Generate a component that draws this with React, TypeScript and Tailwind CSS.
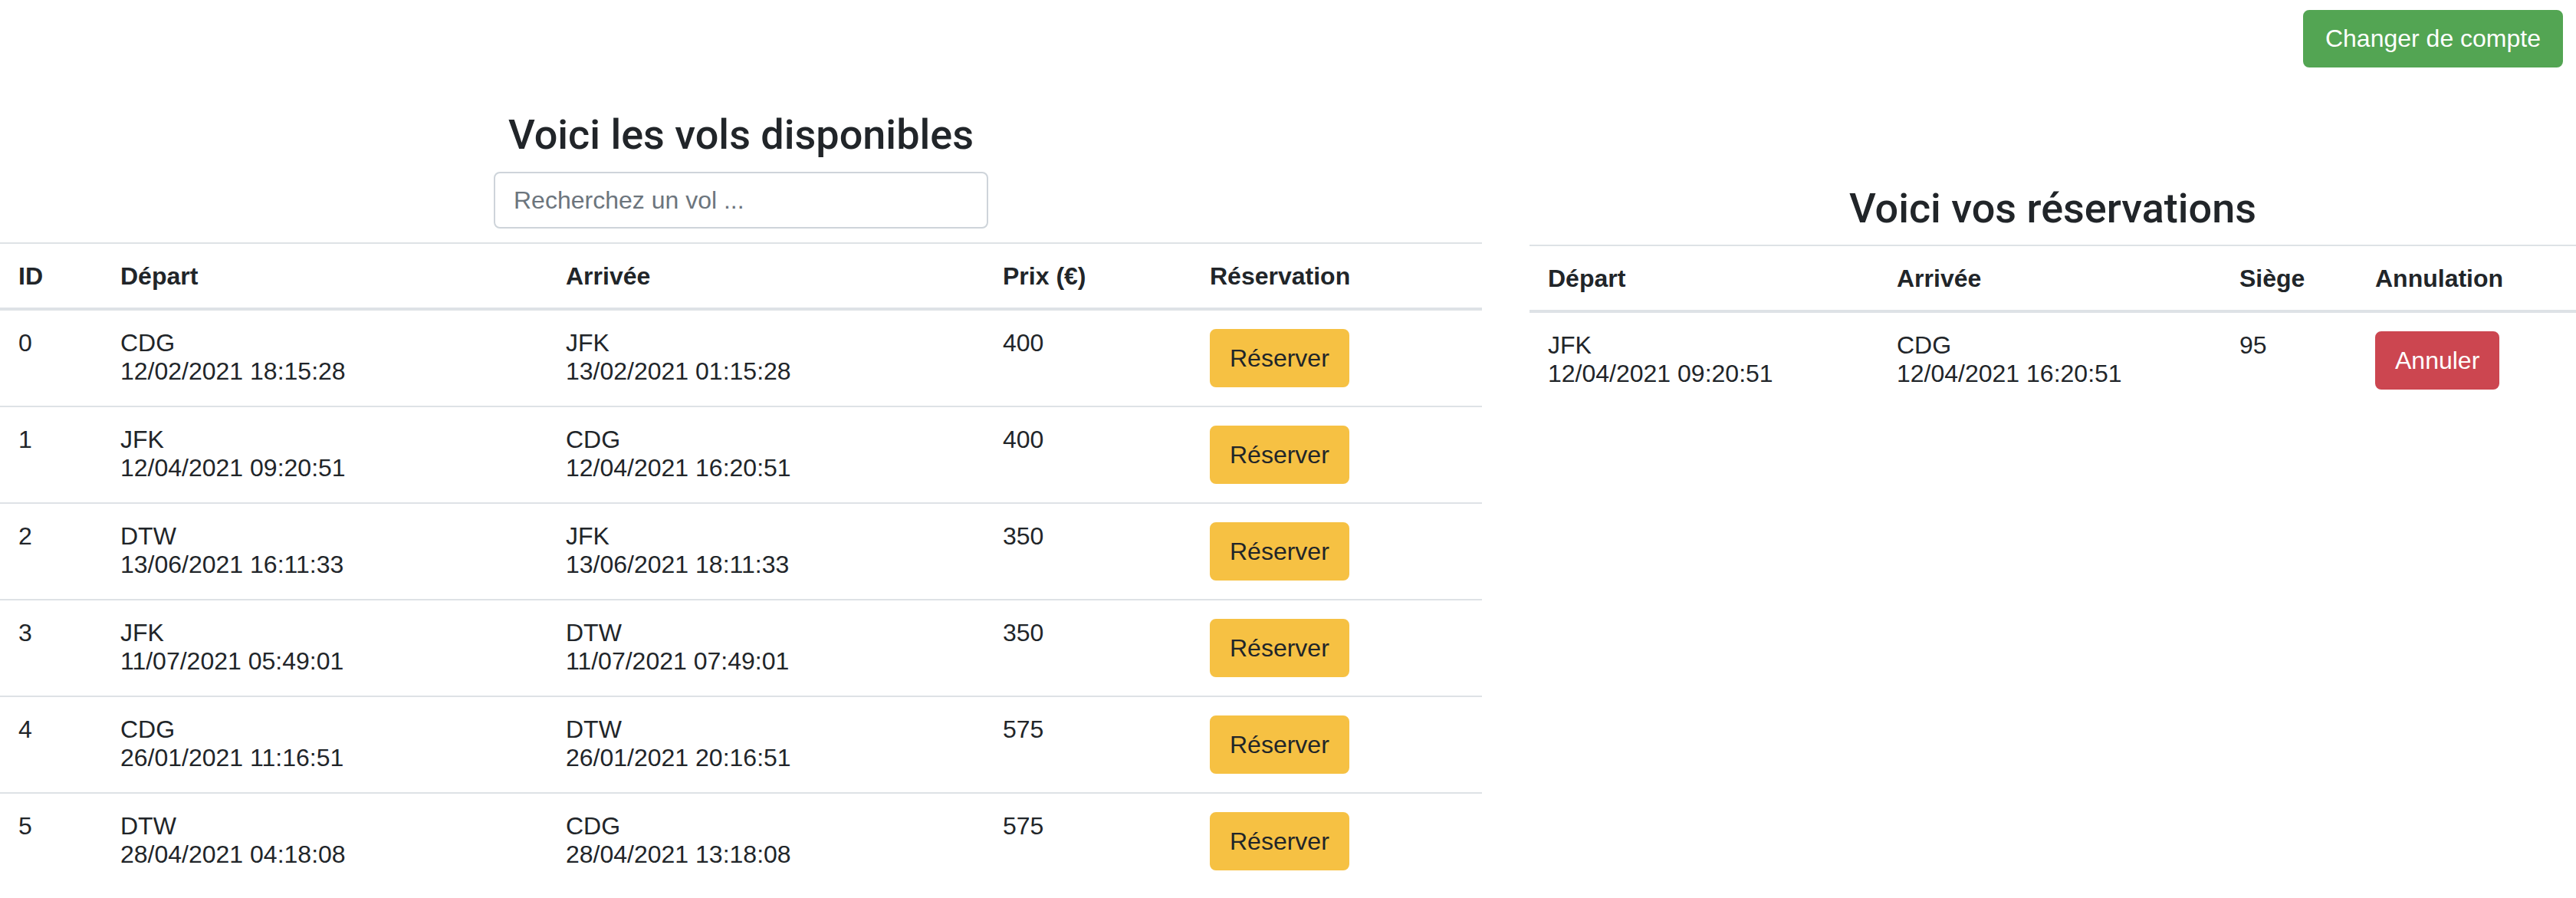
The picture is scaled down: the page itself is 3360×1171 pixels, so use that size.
import React from 'react';

type Flight = {
  id: number;
  from: string;
  fromDate: string;
  to: string;
  toDate: string;
  price: number;
};

const flights: Flight[] = [
  { id: 0, from: 'CDG', fromDate: '12/02/2021 18:15:28', to: 'JFK', toDate: '13/02/2021 01:15:28', price: 400 },
  { id: 1, from: 'JFK', fromDate: '12/04/2021 09:20:51', to: 'CDG', toDate: '12/04/2021 16:20:51', price: 400 },
  { id: 2, from: 'DTW', fromDate: '13/06/2021 16:11:33', to: 'JFK', toDate: '13/06/2021 18:11:33', price: 350 },
  { id: 3, from: 'JFK', fromDate: '11/07/2021 05:49:01', to: 'DTW', toDate: '11/07/2021 07:49:01', price: 350 },
  { id: 4, from: 'CDG', fromDate: '26/01/2021 11:16:51', to: 'DTW', toDate: '26/01/2021 20:16:51', price: 575 },
  { id: 5, from: 'DTW', fromDate: '28/04/2021 04:18:08', to: 'CDG', toDate: '28/04/2021 13:18:08', price: 575 },
];

const bookings = [
  { from: 'JFK', fromDate: '12/04/2021 09:20:51', to: 'CDG', toDate: '12/04/2021 16:20:51', seat: 95 },
];

const thClass =
  'text-left align-bottom font-bold pl-[24px] pr-[24px] pt-[24px] pb-[22px] border-t-2 border-b-4 border-[#dee2e6]';

const tdClass = (first: boolean) =>
  first ? 'align-top p-[24px]' : 'align-top p-[24px] border-t-2 border-[#dee2e6]';

export default function App() {
  return (
    <div className="min-h-screen bg-white text-[#212529] font-['Liberation_Sans',Arial,sans-serif] text-[32px] leading-[37px]">
      {/* top bar */}
      <div className="flex justify-end pt-[13px] pr-[17px]">
        <button className="h-[75px] px-[27px] flex items-center rounded-[8px] bg-[#53a553] border-2 border-[#53a553] text-white text-[32px]">
          Changer de compte
        </button>
      </div>

      <div className="flex items-start">
        {/* available flights */}
        <div className="w-[1933px] shrink-0 pt-[54px] flex flex-col items-center">
          <h3 className="font-['Roboto',sans-serif] text-[54px] leading-[67px] font-medium mb-[15px]">
            Voici les vols disponibles
          </h3>
          <input
            type="text"
            placeholder="Recherchez un vol ..."
            className="w-[645px] h-[74px] mb-[18px] px-[24px] border-2 border-[#ced4da] rounded-[8px] text-[32px] placeholder:text-[#6c757d] outline-none"
          />
          <table className="w-full table-fixed border-separate border-spacing-0">
            <thead>
              <tr>
                <th className={`${thClass} w-[133px]`}>ID</th>
                <th className={`${thClass} w-[581px]`}>Départ</th>
                <th className={`${thClass} w-[570px]`}>Arrivée</th>
                <th className={`${thClass} w-[270px]`}>Prix (€)</th>
                <th className={thClass}>Réservation</th>
              </tr>
            </thead>
            <tbody>
              {flights.map((f, i) => (
                <tr key={f.id}>
                  <td className={tdClass(i === 0)}>{f.id}</td>
                  <td className={tdClass(i === 0)}>
                    <div>{f.from}</div>
                    <div>{f.fromDate}</div>
                  </td>
                  <td className={tdClass(i === 0)}>
                    <div>{f.to}</div>
                    <div>{f.toDate}</div>
                  </td>
                  <td className={tdClass(i === 0)}>{f.price}</td>
                  <td className={tdClass(i === 0)}>
                    <button className="h-[76px] px-[24px] flex items-center rounded-[8px] bg-[#f6c143] border-2 border-[#f6c143] text-[#212529] text-[32px]">
                      Réserver
                    </button>
                  </td>
                </tr>
              ))}
            </tbody>
          </table>
        </div>

        {/* my bookings */}
        <div className="flex-1 ml-[62px] pt-[150px] flex flex-col items-center">
          <h3 className="font-['Roboto',sans-serif] text-[54px] leading-[67px] font-medium mb-[14px]">
            Voici vos réservations
          </h3>
          <table className="w-full table-fixed border-separate border-spacing-0">
            <thead>
              <tr>
                <th className={`${thClass} w-[455px]`}>Départ</th>
                <th className={`${thClass} w-[447px]`}>Arrivée</th>
                <th className={`${thClass} w-[177px]`}>Siège</th>
                <th className={thClass}>Annulation</th>
              </tr>
            </thead>
            <tbody>
              {bookings.map((b, i) => (
                <tr key={i}>
                  <td className={tdClass(i === 0)}>
                    <div>{b.from}</div>
                    <div>{b.fromDate}</div>
                  </td>
                  <td className={tdClass(i === 0)}>
                    <div>{b.to}</div>
                    <div>{b.toDate}</div>
                  </td>
                  <td className={tdClass(i === 0)}>{b.seat}</td>
                  <td className={tdClass(i === 0)}>
                    <button className="h-[76px] px-[24px] flex items-center rounded-[8px] bg-[#cc4650] border-2 border-[#cc4650] text-white text-[32px]">
                      Annuler
                    </button>
                  </td>
                </tr>
              ))}
            </tbody>
          </table>
        </div>
      </div>
    </div>
  );
}
